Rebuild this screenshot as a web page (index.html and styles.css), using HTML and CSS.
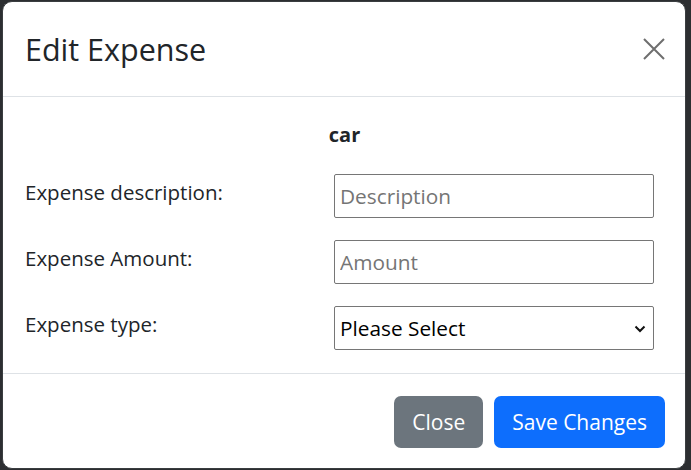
FILE: index.html
```html
<!DOCTYPE html>
<html lang="en">
<head>
<meta charset="utf-8">
<title>Edit Expense</title>
<link rel="stylesheet" href="styles.css">
</head>
<body>
<div class="modal">
  <header class="modal-header">
    <h4 class="modal-title">Edit Expense</h4>
    <button class="btn-close" type="button" aria-label="Close">
      <svg width="22" height="22" viewBox="0 0 22 22"><path d="M1 1L21 21M21 1L1 21" stroke="#6e6e6e" stroke-width="2" fill="none"/></svg>
    </button>
  </header>
  <main class="modal-body">
    <div class="item-name">car</div>
    <div class="form-row">
      <label class="form-label" for="desc">Expense description:</label>
      <input class="field" id="desc" type="text" placeholder="Description">
    </div>
    <div class="form-row">
      <label class="form-label" for="amt">Expense Amount:</label>
      <input class="field" id="amt" type="text" placeholder="Amount">
    </div>
    <div class="form-row">
      <label class="form-label" for="type">Expense type:</label>
      <div class="select-wrap">
        <select class="field select" id="type">
          <option>Please Select</option>
        </select>
        <svg class="chevron" width="12" height="8" viewBox="0 0 12 8"><path d="M1.5 1.5L6 6L10.5 1.5" stroke="#111" stroke-width="2" fill="none"/></svg>
      </div>
    </div>
  </main>
  <footer class="modal-footer">
    <button class="btn btn-secondary" type="button">Close</button>
    <button class="btn btn-primary" type="button">Save Changes</button>
  </footer>
</div>
</body>
</html>
```
FILE: styles.css
```css
html, body {
  margin: 0;
  padding: 0;
}
body {
  background: #2c2e31;
  font-family: "Open Sans", "Noto Sans", sans-serif;
  color: #212529;
  height: 470px;
  overflow: hidden;
}
.modal {
  margin: 1px 5px 0 2px;
  height: 466px;
  background: #fff;
  border: 1px solid #3a3d40;
  border-radius: 10px;
  display: flex;
  flex-direction: column;
  overflow: hidden;
}
.modal-header {
  display: flex;
  align-items: center;
  justify-content: space-between;
  height: 94px;
  padding: 0 20px 0 22px;
  border-bottom: 1px solid #dee2e6;
}
.modal-title {
  margin: 0;
  font-size: 30.5px;
  font-weight: 500;
  line-height: 36px;
  color: #212529;
}
.btn-close {
  border: 0;
  background: transparent;
  padding: 0;
  width: 22px;
  height: 22px;
  display: flex;
  cursor: pointer;
}
.modal-body {
  flex: 1;
  padding: 23px 31px 0 22px;
  display: flex;
  flex-direction: column;
  gap: 22px;
}
.item-name {
  text-align: center;
  font-weight: 700;
  font-size: 20px;
  line-height: 30px;
  margin-bottom: 2px;
  padding-left: 10px;
}
.form-row {
  display: grid;
  grid-template-columns: 1fr 320px;
  align-items: start;
}
.form-label {
  font-size: 20.5px;
  line-height: 30px;
  padding-top: 3px;
}
.field {
  box-sizing: border-box;
  width: 320px;
  height: 44px;
  margin: 0;
  border: 1px solid #767676;
  border-radius: 2px;
  padding: 0 5px;
  font-family: "Open Sans", "Noto Sans", sans-serif;
  font-size: 20.8px;
  color: #111;
  background: #fff;
}
.field::placeholder {
  color: #757575;
}
.select-wrap {
  position: relative;
  width: 320px;
  height: 44px;
}
.select {
  appearance: none;
  -webkit-appearance: none;
  color: #000;
}
.chevron {
  position: absolute;
  right: 8px;
  top: 19px;
  pointer-events: none;
}
.modal-footer {
  height: 95px;
  border-top: 1px solid #dee2e6;
  display: flex;
  align-items: center;
  justify-content: flex-end;
  gap: 11px;
  padding: 2px 20px 0 0;
  box-sizing: border-box;
}
.btn {
  height: 52px;
  border: 0;
  border-radius: 7px;
  padding: 0 18px;
  font-family: "Open Sans", "Noto Sans", sans-serif;
  font-size: 21px;
  color: #fff;
  cursor: pointer;
}
.btn-secondary {
  background: #6c757d;
}
.btn-primary {
  background: #0d6efd;
}
```
